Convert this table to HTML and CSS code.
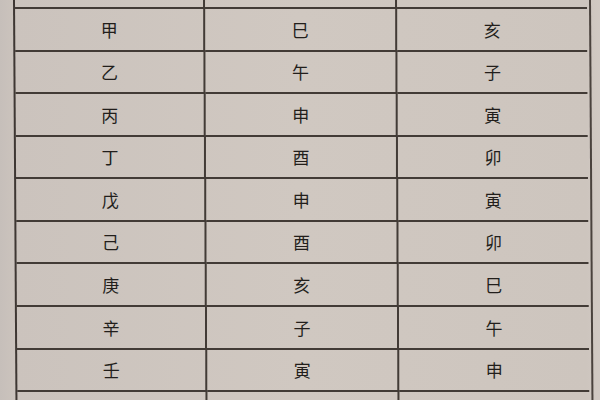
FILE: index.html
```html
<!DOCTYPE html>
<html lang="zh">
<head>
<meta charset="utf-8">
<link rel="stylesheet" href="styles.css">
</head>
<body>
<div class="page">
  <div class="sheet">
    <div class="cell top"></div><div class="cell top"></div><div class="cell top last"></div>
    <div class="cell">甲</div><div class="cell">巳</div><div class="cell last">亥</div>
    <div class="cell">乙</div><div class="cell">午</div><div class="cell last">子</div>
    <div class="cell">丙</div><div class="cell">申</div><div class="cell last">寅</div>
    <div class="cell">丁</div><div class="cell">酉</div><div class="cell last">卯</div>
    <div class="cell">戊</div><div class="cell">申</div><div class="cell last">寅</div>
    <div class="cell">己</div><div class="cell">酉</div><div class="cell last">卯</div>
    <div class="cell">庚</div><div class="cell">亥</div><div class="cell last">巳</div>
    <div class="cell">辛</div><div class="cell">子</div><div class="cell last">午</div>
    <div class="cell">壬</div><div class="cell">寅</div><div class="cell last">申</div>
    <div class="cell bottom"></div><div class="cell bottom"></div><div class="cell bottom last"></div>
  </div>
</div>
</body>
</html>
```
FILE: styles.css
```css
html, body {
  margin: 0;
  padding: 0;
  width: 600px;
  height: 400px;
  overflow: hidden;
  background: #cac3bd;
}
.page {
  width: 600px;
  height: 400px;
  padding-left: 13px;
  box-sizing: border-box;
  background: linear-gradient(90deg, #c6bfba 0, #cbc3bd 14px, #d0c8c1 300px, #cdc5be 586px, #d1c9c3 600px);
}
.sheet {
  display: grid;
  grid-template-columns: 190px 192px 190px;
  grid-template-rows: 8.5px repeat(9, 42.6px) 20px;
  width: 574px;
  border-left: 2px solid #3e3733;
  border-right: 2px solid #4a423d;
  transform: skewX(0.35deg);
  transform-origin: top left;
}
.cell {
  display: flex;
  align-items: center;
  justify-content: center;
  border-right: 2px solid #423b36;
  border-bottom: 2px solid #423b36;
  font-family: "Noto Sans CJK SC", "Noto Sans CJK TC", sans-serif;
  font-size: 17px;
  font-weight: 400;
  color: #221e1b;
  transform: skewX(-0.35deg);
}
.cell.last {
  border-right: none;
}
.cell.bottom {
  border-bottom: none;
}
```
